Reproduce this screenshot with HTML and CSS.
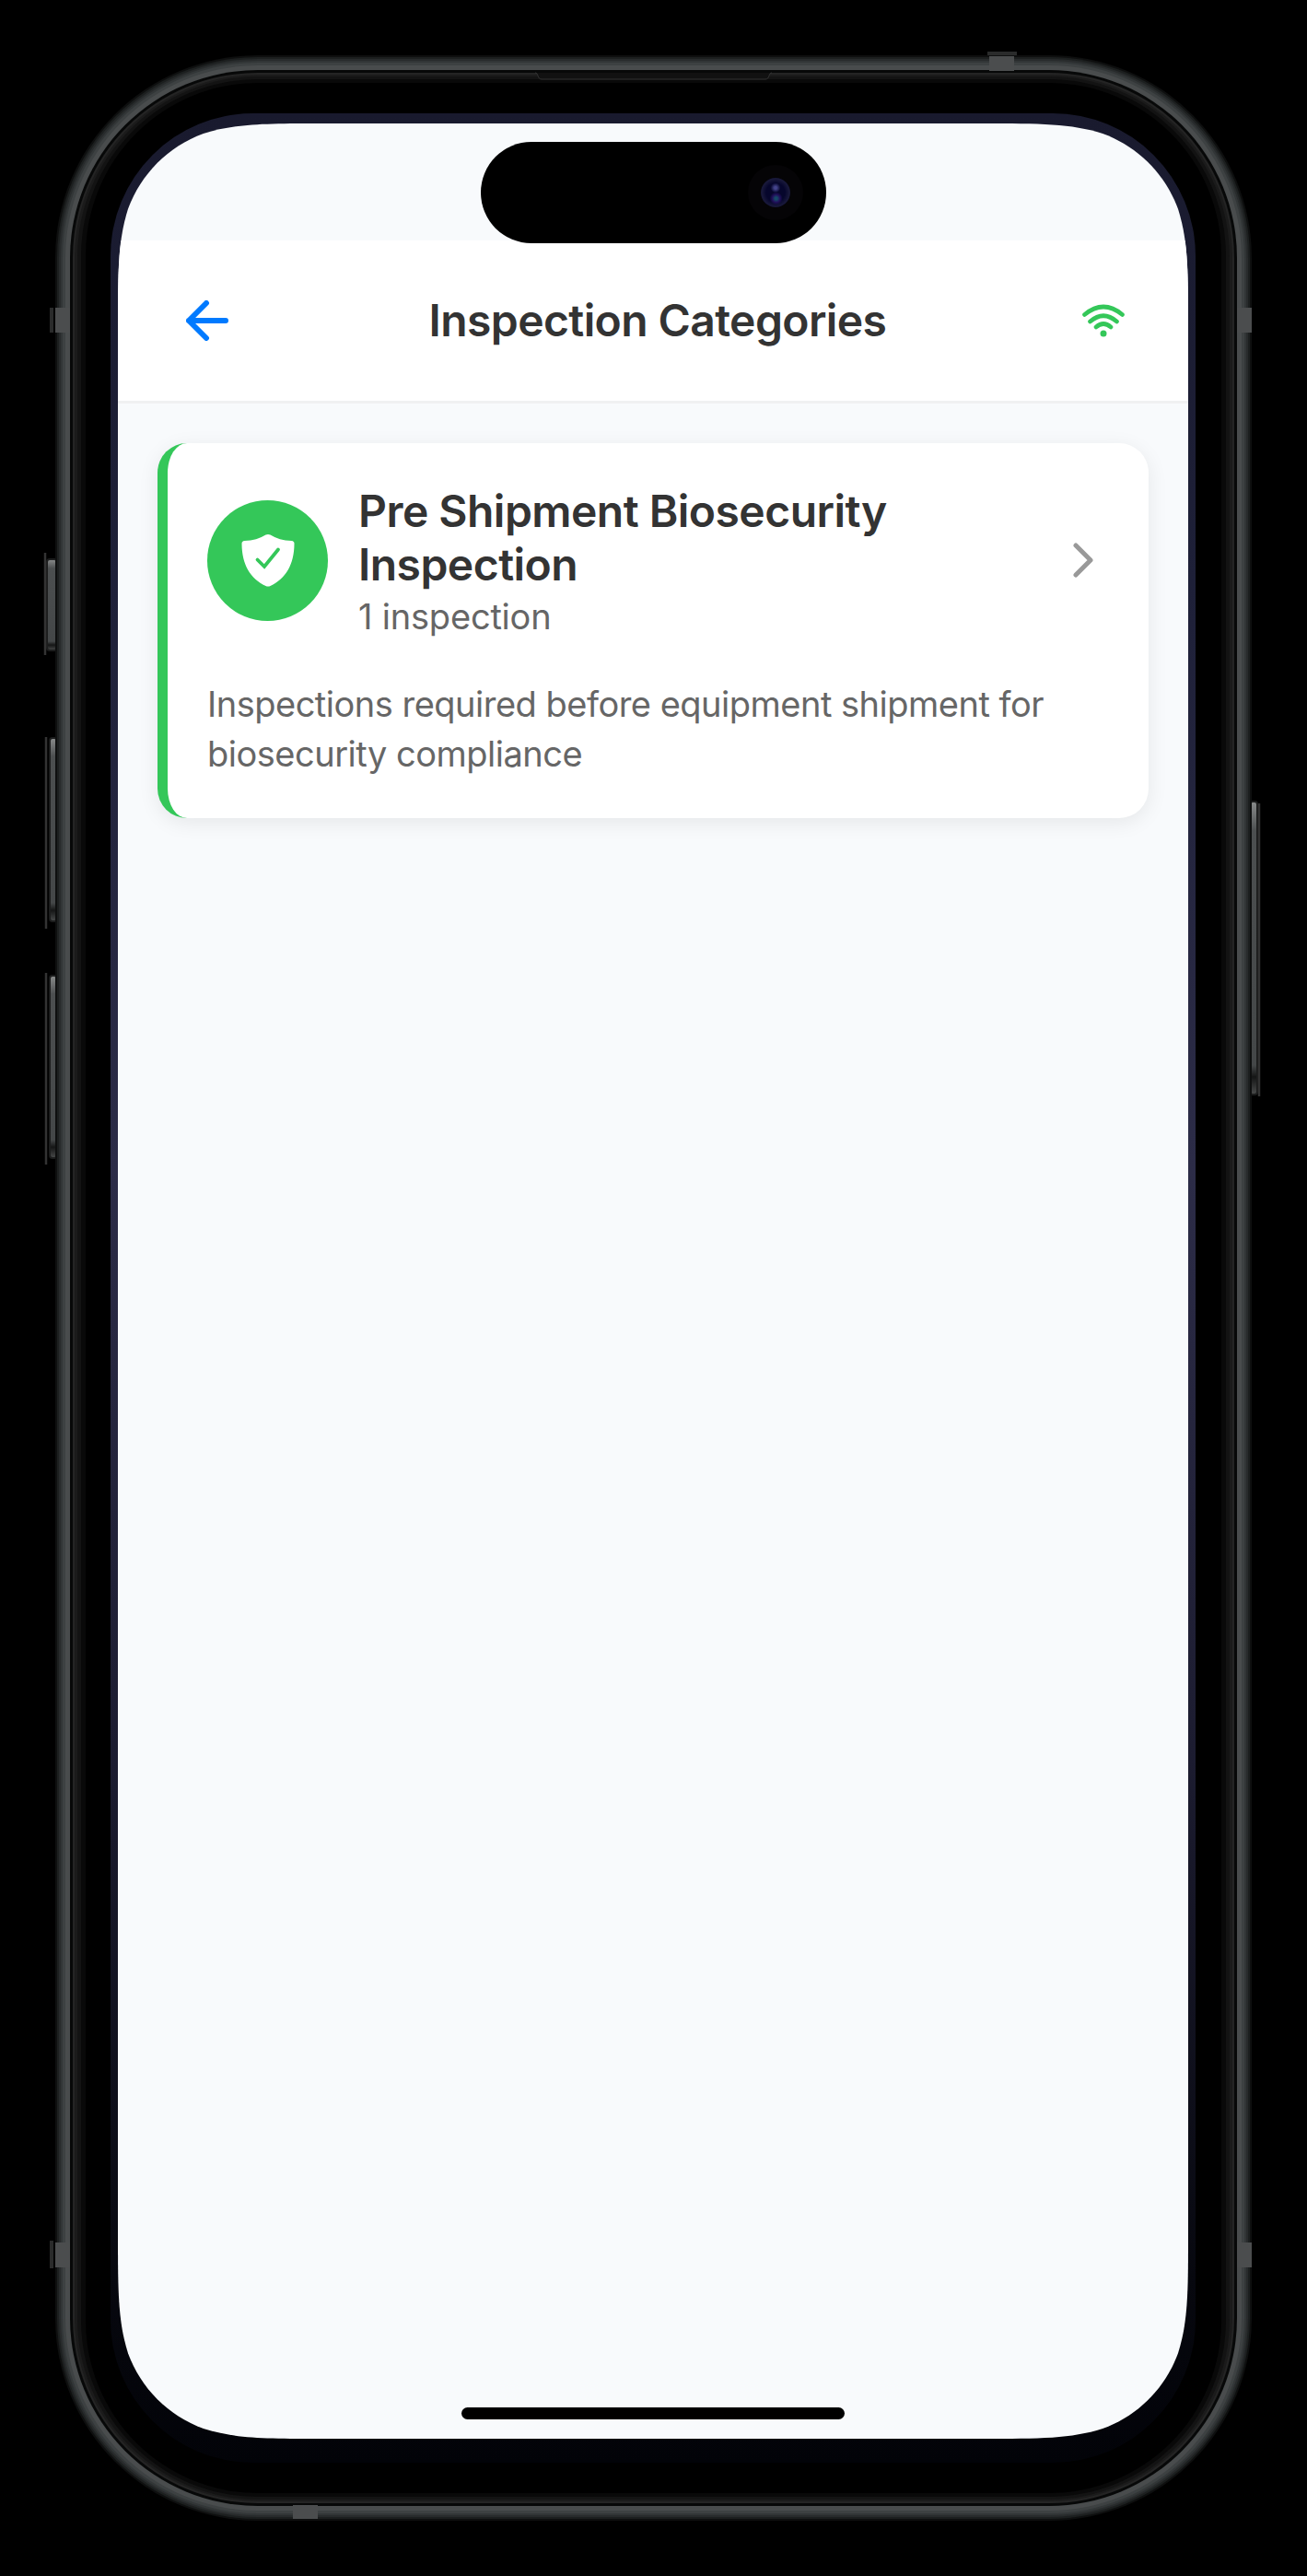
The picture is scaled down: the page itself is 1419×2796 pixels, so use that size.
FILE: index.html
```html
<!DOCTYPE html>
<html lang="en">
<head>
<meta charset="utf-8">
<title>Inspection Categories</title>
<link rel="stylesheet" href="styles.css">
</head>
<body>
<div class="device">
  <svg class="frame" viewBox="0 0 1419 2796" aria-hidden="true">
    <defs>
      <linearGradient id="rim" x1="0" y1="0" x2="0" y2="1">
        <stop offset="0" stop-color="#191a2e"/><stop offset=".2" stop-color="#1e2038"/><stop offset=".45" stop-color="#2c2c47"/><stop offset=".7" stop-color="#1c1c30"/><stop offset=".92" stop-color="#07080f"/><stop offset="1" stop-color="#020308"/>
      </linearGradient>
      <linearGradient id="key" x1="0" y1="0" x2="0" y2="1">
        <stop offset="0" stop-color="#8a8c8c"/><stop offset=".1" stop-color="#4c4f50"/><stop offset=".9" stop-color="#444748"/><stop offset=".94" stop-color="#151616"/><stop offset="1" stop-color="#4a4c4c"/>
      </linearGradient>
    </defs>
    <g fill="url(#key)" stroke="#1c1d1d" stroke-width="2">
      <rect x="51" y="607" width="11" height="99" rx="3"/>
      <rect x="54" y="801" width="8" height="199" rx="3"/>
      <rect x="54" y="1059" width="8" height="198" rx="3"/>
      <rect x="1357" y="870" width="8" height="318" rx="3"/>
    </g>
    <path d="M49 600v111M50 800v208M50 1056v208M1367 872v318" stroke="#333" stroke-width="2.500"/>
    <rect x="60" y="60" width="1299" height="2676" rx="220" fill="#0e0f0f"/>
    <rect x="62" y="62" width="1295" height="2672" rx="218" fill="#1c1f1f"/>
    <rect x="64" y="64" width="1291" height="2668" rx="216" fill="#282b2c"/>
    <rect x="66" y="66" width="1287" height="2664" rx="214" fill="#323637"/>
    <rect x="68" y="68" width="1283" height="2660" rx="212" fill="#3d4142"/>
    <rect x="71" y="71" width="1277" height="2654" rx="209" fill="#494c4d"/>
    <rect x="76" y="76" width="1267" height="2644" rx="204" fill="#070808"/>
    <rect x="79" y="79" width="1261" height="2638" rx="201" fill="#242424"/>
    <rect x="81" y="81" width="1257" height="2634" rx="199" fill="#1b1b1b"/>
    <rect x="84" y="83" width="1251" height="2630" rx="196" fill="#131313"/>
    <rect x="88" y="86" width="1243" height="2624" rx="192" fill="#090909"/>
    <rect x="93" y="90" width="1233" height="2616" rx="187" fill="#000"/>
    <g fill="#4b4d4e">
      <rect x="60" y="334" width="16" height="27"/><rect x="1343" y="334" width="16" height="27"/>
      <rect x="60" y="2434" width="16" height="27"/><rect x="1343" y="2434" width="16" height="27"/>
      <rect x="1074" y="61" width="27" height="16"/><rect x="318" y="2719" width="27" height="15"/>
    </g>
    <path d="M56 334v27M56 2432v30M1072 58h32" stroke="#2a2b2b" stroke-width="4"/>
    <path d="M581 79c4 0 2 7 7 7h243c5 0 3-7 7-7" fill="#111" stroke="#353535"/>
    <rect x="120" y="123" width="1178" height="2550" rx="155" fill="url(#rim)"/>
  </svg>
  <main class="screen">
    <div class="status">
      <div class="island"><span class="camera"></span></div>
    </div>
    <header class="header">
      <svg class="back" viewBox="0 0 46 44" aria-label="Back"><path d="M22 3 3 22l19 19M3 22h40" fill="none" stroke="#007aff" stroke-width="6" stroke-linecap="round" stroke-linejoin="round"/></svg>
      <h1 class="title">Inspection Categories</h1>
      <svg class="wifi" viewBox="0 0 46 36" aria-label="Online"><g fill="none" stroke="#34c759" stroke-width="4.600" stroke-linecap="round"><path d="M2.500 11.500Q23-5.500 43.500 11.500M8.500 19Q23 6.500 37.500 19M15 25Q23 18 31 25"/></g><circle cx="23" cy="32" r="3.500" fill="#34c759"/></svg>
    </header>
    <section class="card">
      <div class="card-top">
        <div class="badge">
          <svg class="shield" viewBox="0 0 58 58"><path d="M26.500 1.500Q29 .3 31.500 1.500Q41 7.500 54.500 8Q57.500 8.300 57.500 11C57.500 34 48 49 31.500 57Q29 58.200 26.500 57C10 49 .5 34 .5 11Q.5 8.300 3.500 8Q17 7.500 26.500 1.500Z" fill="#fff"/><path d="m17.500 28.500 7.500 7.500 15-18.500" fill="none" stroke="#34c759" stroke-width="3.800" stroke-linecap="round"/></svg>
        </div>
        <div class="heading">
          <h2 class="name">Pre Shipment Biosecurity<br>Inspection</h2>
          <p class="count">1 inspection</p>
        </div>
        <svg class="chevron" viewBox="0 0 22 38"><path d="m3 3 16 16L3 35" fill="none" stroke="#999" stroke-width="5" stroke-linecap="round" stroke-linejoin="round"/></svg>
      </div>
      <p class="desc">Inspections required before equipment shipment for<br>biosecurity compliance</p>
    </section>
    <div class="home"></div>
  </main>
</div>
</body>
</html>
```
FILE: styles.css
```css
body { margin: 0; background: #000; font-family: Inter, "Liberation Sans", sans-serif; }
h1, h2, p { margin: 0; }
.device { display: grid; width: 1419px; height: 2796px; }
.frame, .screen { grid-area: 1 / 1; }
.frame { width: 1419px; height: 2796px; }
.screen {
  display: flex;
  flex-direction: column;
  width: 1162px;
  height: 2513px;
  margin: 134px 0 0 128px;
  background: #f8fafc;
  clip-path: path("M0 225C0 160 0 127.700 11 92.800C24.900 54.800 54.800 24.900 92.800 11C127.700 0 160 0 225 0H937C1002 0 1034.300 0 1069.200 11C1107.200 24.900 1137.100 54.800 1151 92.800C1162 127.700 1162 160 1162 225V2288C1162 2353 1162 2385.300 1151 2420.200C1137.100 2458.200 1107.200 2488.100 1069.200 2502C1034.300 2513 1002 2513 937 2513H225C160 2513 127.700 2513 92.800 2502C54.800 2488.100 24.900 2458.200 11 2420.200C0 2385.300 0 2353 0 2288Z");
}
.status { display: flex; justify-content: center; height: 127px; padding-top: 20px; box-sizing: border-box; }
.island {
  display: flex;
  flex-shrink: 0;
  align-items: center;
  justify-content: flex-end;
  box-sizing: border-box;
  width: 375px;
  height: 110px;
  margin-left: 1px;
  padding-right: 39px;
  border-radius: 55px;
  background: #000;
  z-index: 1;
}
.camera {
  width: 32px;
  height: 32px;
  border-radius: 50%;
  background: radial-gradient(circle at 50% 34%, #44448c 0 5%, transparent 20%), radial-gradient(circle at 52% 70%, #164a68 0 5%, #21105c 15%, transparent 25%), radial-gradient(circle, #06062c 45%, #18183a 65%, #15152d 100%);
  box-shadow: 0 0 0 14px #050406;
}
.header {
  display: flex;
  align-items: center;
  justify-content: space-between;
  box-sizing: border-box;
  height: 177px;
  padding: 0 69px 0 74px;
  background: #fff;
  border-bottom: 3px solid #f0f1f2;
}
.back { width: 46px; height: 44px; }
.wifi { width: 46px; height: 36px; }
.title { margin-left: 5px; color: #333; font-size: 48px; font-weight: 600; line-height: 60px; letter-spacing: -.6px; white-space: nowrap; }
.card {
  box-sizing: border-box;
  width: 1076px;
  height: 407px;
  margin: 43px 0 0 43px;
  padding: 43px 43px 0;
  border-left: 11px solid #34c759;
  border-radius: 32px;
  background: #fff;
  box-shadow: 0 5px 22px rgba(0, 0, 0, .08);
}
.card-top { display: flex; align-items: center; height: 168px; }
.badge { display: flex; flex-shrink: 0; align-items: center; justify-content: center; width: 131px; height: 131px; border-radius: 50%; background: #34c759; }
.shield { width: 58px; height: 58px; }
.heading { flex: 1; margin-left: 33px; padding-top: 5px; }
.name { color: #333; font-size: 48px; font-weight: 600; line-height: 58px; letter-spacing: -.53px; white-space: nowrap; }
.count { color: #666; font-size: 38px; line-height: 54px; letter-spacing: -.2px; }
.chevron { width: 22px; height: 38px; margin-right: 17px; }
.desc { margin-top: 45px; color: #666; font-size: 38px; line-height: 54px; letter-spacing: -.5px; white-space: nowrap; }
.home { width: 416px; height: 13px; margin: auto auto 21px; border-radius: 7px; background: #000; }
```
